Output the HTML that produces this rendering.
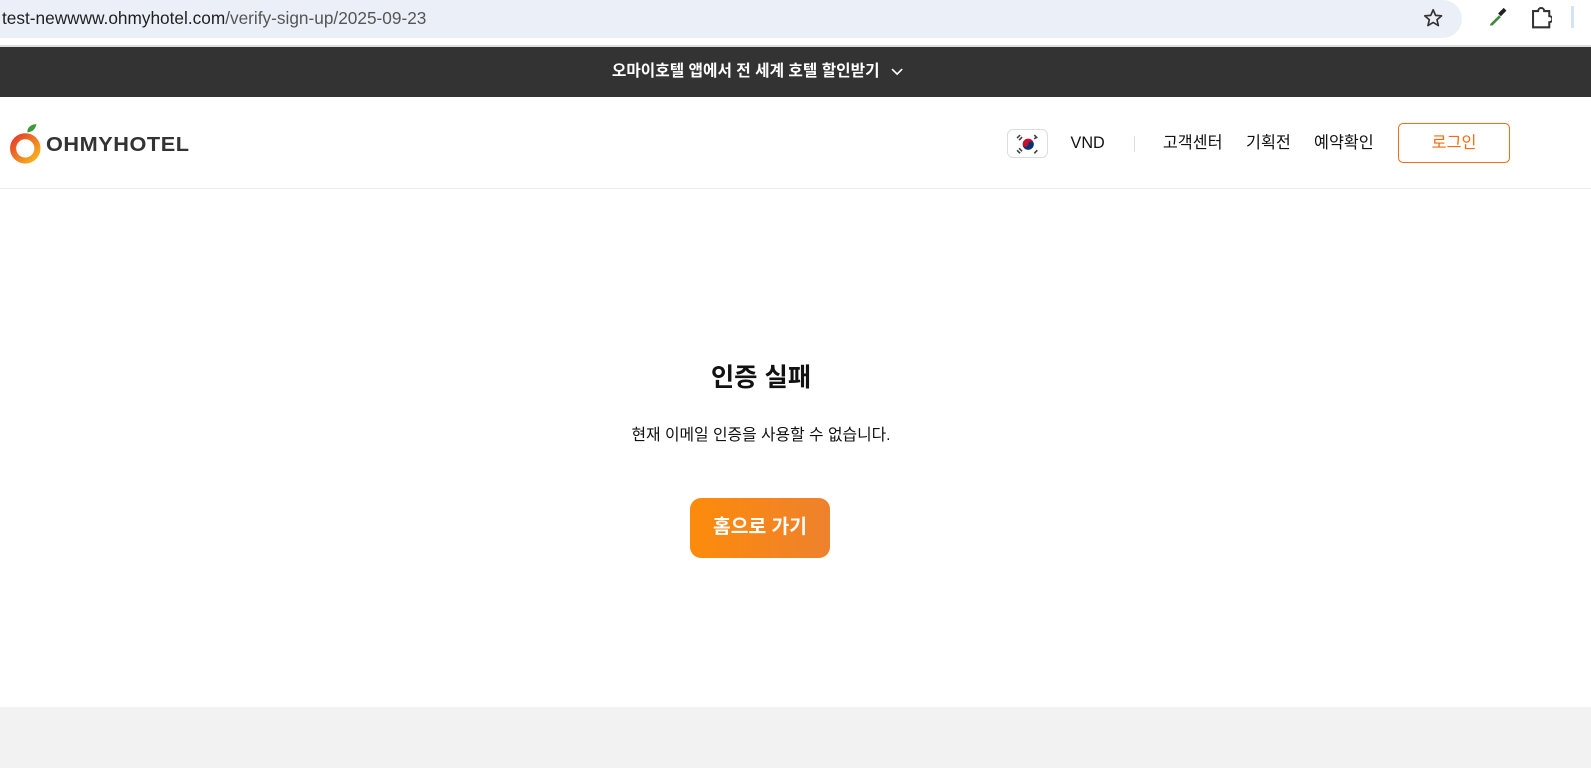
<!DOCTYPE html>
<html><head><meta charset="utf-8"><style>
*{margin:0;padding:0;box-sizing:border-box}
html,body{width:1591px;height:763px;overflow:hidden;background:#fff}
body{font-family:"Liberation Sans","Noto Sans CJK KR",sans-serif}
#w{position:absolute;left:0;top:0;width:1568px;height:752px;zoom:1.0147}
.abs{position:absolute}
</style></head><body><div id="w">
<!-- chrome bar -->
<div class="abs" style="left:0;top:0;width:1568px;height:44px;background:#fff"></div>
<div class="abs" style="left:-20px;top:0;width:1461px;height:37px;background:#ebf0f8;border-radius:0 19px 19px 0"></div>
<div class="abs" style="left:2px;top:7px;font-size:17px;color:#1f1f1f;line-height:22px">test-newwww.ohmyhotel.com<span style="color:#555">/verify-sign-up/2025-09-23</span></div>
<svg class="abs" style="left:1401px;top:7px" width="22" height="22" viewBox="0 0 24 24"><path d="M12 3l2.6 6 6.4.5-4.9 4.2 1.5 6.3L12 16.6 6.4 20l1.5-6.3L3 9.5 9.4 9z" fill="none" stroke="#333" stroke-width="1.8" stroke-linejoin="round"/></svg>
<svg class="abs" style="left:1464px;top:6px" width="22" height="22" viewBox="0 0 24 24"><path d="M4 21l1-2 9-9 2 2-9 9z" fill="#3a8a3a"/><path d="M13 8l6-6 3 3-6 6z" fill="#222"/></svg>
<svg class="abs" style="left:1508px;top:6px" width="22" height="24" viewBox="0 0 22 24"><path d="M3 5h5a3 3 0 0 1 6 0h5v5a3 3 0 0 1 0 6v5H3z" fill="none" stroke="#333" stroke-width="2"/></svg>
<div class="abs" style="left:1548px;top:6px;width:3px;height:22px;background:#d6e2f7"></div>
<div class="abs" style="left:0;top:44px;width:1568px;height:2px;background:#ddd"></div>
<!-- banner -->
<div class="abs" style="left:0;top:46px;width:1568px;height:50px;background:#333"></div>
<div class="abs" style="left:603px;top:46px;color:#fff;font-size:15.5px;font-weight:bold;line-height:50px;white-space:nowrap">오마이호텔 앱에서 전 세계 호텔 할인받기</div>
<svg class="abs" style="left:877px;top:66px" width="14" height="10" viewBox="0 0 14 10"><path d="M2 2l5 5 5-5" fill="none" stroke="#fff" stroke-width="1.6"/></svg>
<!-- header -->
<div class="abs" style="left:0;top:185px;width:1568px;height:1px;background:#eee"></div>
<svg class="abs" style="left:6px;top:117px" width="38" height="48" viewBox="0 0 38 48"><defs><linearGradient id="g" x1="0" y1="0" x2="1" y2="1"><stop offset="0" stop-color="#e53b2c"/><stop offset="1" stop-color="#f6b81d"/></linearGradient></defs><circle cx="19" cy="29" r="12" fill="none" stroke="url(#g)" stroke-width="6"/><path d="M21 13c0-5 4-8 9-8-1 5-4 8-9 8z" fill="#3b9a3a"/></svg>
<div class="abs" style="left:45px;top:132px;font-size:20px;font-weight:900;color:#333;line-height:22px;transform:scaleX(1.07);transform-origin:left;letter-spacing:0.5px">OHMYHOTEL</div>
<div class="abs" style="left:992px;top:127px;width:41px;height:29px;border:1px solid #ddd;border-radius:6px;background:#fff"></div>
<svg class="abs" style="left:999px;top:130px" width="28" height="24" viewBox="0 0 28 24"><circle cx="14" cy="12" r="5.5" fill="#c8102e"/><path d="M8.5 12a5.5 5.5 0 0 0 11 0a2.75 2.75 0 0 0-5.5 0a2.75 2.75 0 0 1-5.5 0z" fill="#003478"/><g stroke="#444" stroke-width="1.6"><path d="M3 6l3-3M5 8l3-3M20 3l3 3M22 5l-2 2M3 18l3 3M20 21l3-3M22 19l-2 2M5 16l3 3"/></g></svg>
<div class="abs" style="left:1055px;top:131px;font-size:16px;color:#111;line-height:20px">VND</div>
<div class="abs" style="left:1118px;top:134px;width:1px;height:16px;background:#ddd"></div>
<div class="abs" style="left:1146px;top:131px;font-size:16px;color:#111;line-height:20px">고객센터</div>
<div class="abs" style="left:1228px;top:131px;font-size:16px;color:#111;line-height:20px">기획전</div>
<div class="abs" style="left:1295px;top:131px;font-size:16px;color:#111;line-height:20px">예약확인</div>
<div class="abs" style="left:1378px;top:121px;width:110px;height:40px;border:1px solid #f56c12;border-radius:5px;color:#f56c12;font-size:16px;text-align:center;line-height:38px">로그인</div>
<!-- content -->
<div class="abs" style="left:0;top:356px;width:1500px;text-align:center;font-size:25px;font-weight:bold;color:#111;line-height:34px">인증 실패</div>
<div class="abs" style="left:0;top:420px;width:1500px;text-align:center;font-size:15.6px;color:#111;line-height:20px">현재 이메일 인증을 사용할 수 없습니다.</div>
<div class="abs" style="left:680px;top:491px;width:138px;height:59px;border-radius:11px;background:linear-gradient(90deg,#fd8b0b,#ee812d);color:#fff;font-size:19px;font-weight:bold;text-align:center;line-height:59px">홈으로 가기</div>
<!-- footer -->
<div class="abs" style="left:0;top:697px;width:1568px;height:60px;background:#f2f2f2"></div>
</div></body></html>
